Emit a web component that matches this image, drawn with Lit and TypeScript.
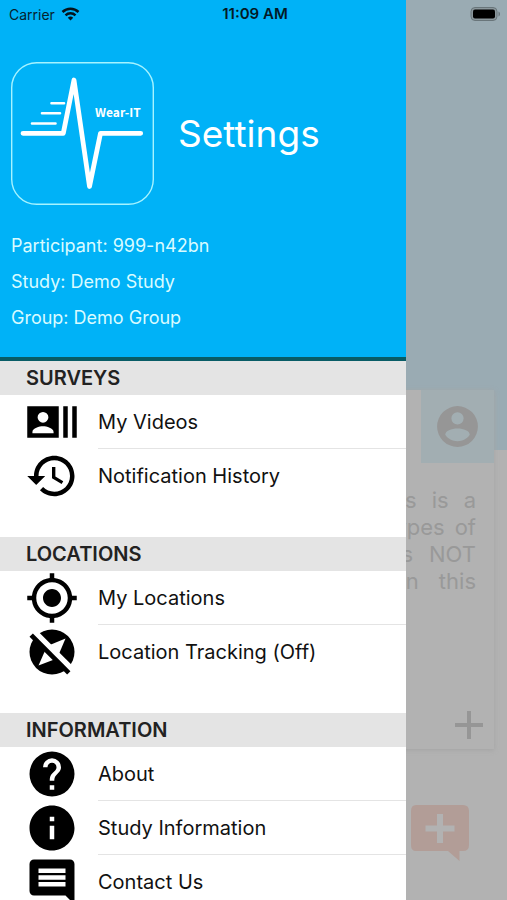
import { LitElement, html, css, svg } from "lit";
import { customElement, property } from "lit/decorators.js";

type IconName = "actors" | "history" | "gps" | "compassOff" | "help" | "info" | "comment";

const icons: Record<IconName, unknown> = {
  actors: svg`<path fill-rule="evenodd" d="M21 5h2v14h-2zM17 5h2v14h-2zM1 5h14v14H1zM8 7.500a2.400 2.400 0 1 0 0 4.800a2.400 2.400 0 1 0 0-4.800zM12.700 17v-.6c0-1.600-3.100-2.500-4.700-2.500s-4.700.9-4.700 2.500v.6z"/>`,
  history: svg`<path d="M13 3c-4.970 0-9 4.030-9 9H1l3.890 3.890.07.14L9 12H6c0-3.870 3.130-7 7-7s7 3.130 7 7-3.130 7-7 7c-1.930 0-3.680-.79-4.940-2.060l-1.420 1.420C8.270 19.990 10.510 21 13 21c4.970 0 9-4.030 9-9s-4.030-9-9-9zm-1 5v5l4.280 2.540.72-1.210-3.500-2.080V8H12z"/>`,
  gps: svg`<path d="M12 8c-2.210 0-4 1.790-4 4s1.790 4 4 4 4-1.790 4-4-1.790-4-4-4zm8.940 3A8.994 8.994 0 0 0 13 3.060V1h-2v2.060A8.994 8.994 0 0 0 3.060 11H1v2h2.060A8.994 8.994 0 0 0 11 20.940V23h2v-2.060A8.994 8.994 0 0 0 20.940 13H23v-2h-2.060zM12 19c-3.870 0-7-3.130-7-7s3.130-7 7-7 7 3.130 7 7-3.130 7-7 7z"/>`,
  compassOff: svg`
    <circle cx="12" cy="12" r="10"/>
    <path fill="#fff" d="M14.800 13.600L13 15.300L6 18l3-6.800L11 8.900L18 6z"/>
    <path fill="#fff" d="M3.280 4L4.500 2.200L6.300 3.300L21.700 18.700L20 20.720z"/>
    <path d="M2 5.270L3.500 3.800L20.200 20.500L18.730 22z"/>`,
  help: svg`<path d="M15.070 11.250l-.9.920C13.450 12.890 13 13.500 13 15h-2v-.5c0-1.110.45-2.110 1.170-2.830l1.240-1.260c.37-.36.59-.86.59-1.410a2 2 0 0 0-4 0H8a4 4 0 0 1 8 0c0 .88-.36 1.670-.93 2.250M13 19h-2v-2h2M12 2a10 10 0 1 0 0 20 10 10 0 0 0 0-20z"/>`,
  info: svg`<path d="M12 2C6.480 2 2 6.480 2 12s4.480 10 10 10 10-4.480 10-10S17.520 2 12 2zm1 15h-2v-6h2v6zm0-8h-2V7h2v2z"/>`,
  comment: svg`<path d="M21.990 4c0-1.100-.89-2-1.990-2H4c-1.100 0-2 .9-2 2v12c0 1.100.9 2 2 2h14l4 4-.01-18zM18 14H6v-2h12v2zm0-3H6V9h12v2zm0-3H6V6h12v2z"/>`,
};

interface Section {
  title: string;
  items: { icon: IconName; label: string }[];
}

const sections: Section[] = [
  {
    title: "SURVEYS",
    items: [
      { icon: "actors", label: "My Videos" },
      { icon: "history", label: "Notification History" },
    ],
  },
  {
    title: "LOCATIONS",
    items: [
      { icon: "gps", label: "My Locations" },
      { icon: "compassOff", label: "Location Tracking (Off)" },
    ],
  },
  {
    title: "INFORMATION",
    items: [
      { icon: "help", label: "About" },
      { icon: "info", label: "Study Information" },
      { icon: "comment", label: "Contact Us" },
    ],
  },
];

@customElement("status-bar")
class StatusBar extends LitElement {
  static styles = css`
    :host {
      display: grid;
      grid-template-columns: 1fr auto 1fr;
      align-items: center;
      height: 28px;
      padding: 0 6px 0 9px;
      font-size: 14px;
      color: #06222f;
    }
    .carrier { display: flex; align-items: center; gap: 6px; }
    .time { font-size: 15px; font-weight: 600; line-height: 20px; color: #031a26; }
    .battery { justify-self: end; display: block; }
    svg { display: block; }
  `;
  render() {
    return html`
      <span class="carrier">Carrier
        <svg width="19" height="14" viewBox="0 0 18 14" fill="none" stroke="#04141c" stroke-width="2.500">
          <path d="M1 5A11.500 11.500 0 0 1 17 5"/>
          <path d="M4 8.300A7.300 7.300 0 0 1 14 8.300"/>
          <path d="M9 13.500L6.300 10.700A4 4 0 0 1 11.700 10.700Z" fill="#04141c" stroke="none"/>
        </svg>
      </span>
      <span class="time">11:09 AM</span>
      <svg class="battery" width="31" height="14" viewBox="0 0 31 14">
        <rect x="1" y="0.500" width="26" height="13" rx="4" fill="#8b979c" stroke="#69757a"/>
        <rect x="3" y="2.500" width="22" height="9" rx="2" fill="#000"/>
        <path d="M28.500 4.500c2 .8 2 4.200 0 5z" fill="#69757a"/>
      </svg>
    `;
  }
}

@customElement("menu-section")
class MenuSection extends LitElement {
  @property({ attribute: false }) section!: Section;
  static styles = css`
    :host { display: block; padding-bottom: 34px; }
    h2 {
      margin: 0;
      padding-left: 26px;
      background: #e4e4e4;
      color: #222;
      font-size: 20px;
      font-weight: 600;
      line-height: 34px;
    }
    ul { margin: 0; padding: 0; list-style: none; }
    .row {
      display: flex;
      align-items: center;
      gap: 19px;
      height: 54px;
      padding-left: 25px;
      color: #111;
      text-decoration: none;
    }
    .icon { flex: none; width: 54px; height: 54px; fill: #000; }
    .label {
      flex: 1;
      box-sizing: border-box;
      height: 54px;
      line-height: 54px;
      font-size: 20px;
      white-space: nowrap;
      border-bottom: 1px solid #e4e4e4;
    }
    li:last-child .label { border-bottom-color: transparent; }
  `;
  render() {
    return html`
      <h2>${this.section.title}</h2>
      <ul>
        ${this.section.items.map(
          (item) => html`<li>
            <a class="row" href="#">
              <svg class="icon" viewBox="0 0 24 24" aria-hidden="true">${icons[item.icon]}</svg>
              <span class="label">${item.label}</span>
            </a>
          </li>`
        )}
      </ul>
    `;
  }
}

@customElement("settings-drawer")
class SettingsDrawer extends LitElement {
  static styles = css`
    :host { display: block; background: #fff; }
    header {
      box-sizing: border-box;
      height: 361px;
      padding: 62px 11px 0;
      background: #00b2f7;
      border-bottom: 4px solid #085c66;
      color: #fff;
    }
    .brand { display: flex; align-items: center; gap: 24px; }
    .logo { flex: none; display: block; }
    .logo-name { font: 700 12px "Noto Sans CJK JP", "Open Sans", sans-serif; fill: #fff; }
    h1 { margin: 0; font-size: 37px; font-weight: 400; line-height: 48px; }
    .details {
      margin: 23px 0 0;
      padding: 0;
      list-style: none;
      font-size: 18px;
      line-height: 36px;
      color: #d9fbff;
    }
  `;
  render() {
    return html`
      <header>
        <div class="brand">
          <svg class="logo" width="143" height="143" viewBox="0 0 143 143" fill="none" stroke="#fff" stroke-linecap="round" stroke-linejoin="round">
            <rect x="0.700" y="0.700" width="141.600" height="141.600" rx="25" stroke="#a6f3ff" stroke-width="1.400"/>
            <path stroke-width="4.800" d="M12 71.300H52.300L63 18L78.500 124.500L89.500 71.300H129.700"/>
            <path stroke-width="2.600" d="M40.500 41.200H53M31 51.200H49M21 61.500H44.500"/>
            <text class="logo-name" x="84" y="55" stroke="none">Wear-IT</text>
          </svg>
          <h1>Settings</h1>
        </div>
        <ul class="details">
          <li>Participant: 999-n42bn</li>
          <li>Study: Demo Study</li>
          <li>Group: Demo Group</li>
        </ul>
      </header>
      <nav>${sections.map((s) => html`<menu-section .section=${s}></menu-section>`)}</nav>
    `;
  }
}

const cardLines = [
  { words: ["This", "is", "a"], gap: 15 },
  { words: ["types", "of"], gap: 10 },
  { words: ["is", "NOT"], gap: 16 },
  { words: ["in", "this"], gap: 20 },
];

@customElement("dimmed-page")
class DimmedPage extends LitElement {
  static styles = css`
    :host {
      display: flex;
      flex-direction: column;
      align-items: flex-end;
      box-sizing: border-box;
      padding: 390px 13px 0 0;
      background: linear-gradient(#9aabb3 50%, #b2b2b2 50%);
    }
    .card {
      box-sizing: border-box;
      display: flex;
      flex-direction: column;
      align-items: flex-end;
      width: 95%;
      height: 359px;
      background: #b2b2b2;
      box-shadow: 0 1px 5px #a3a3a3;
    }
    button { border: 0; padding: 0; background: none; display: block; }
    .profile { padding: 12px; background: #a2aeb2; }
    .text {
      margin: 24px 18px 0 0;
      font-size: 22px;
      line-height: 27px;
      color: #999;
    }
    .line { display: flex; justify-content: flex-end; }
    .more { margin: auto 9px 8px 0; }
    .feedback { margin: 50px 22px 0 0; }
    svg { display: block; }
  `;
  render() {
    return html`
      <section class="card">
        <button class="profile" aria-label="Profile">
          <svg width="49" height="49" viewBox="0 0 24 24" fill="#969696">
            <path fill-rule="evenodd" d="M12 2a10 10 0 1 0 0 20a10 10 0 0 0 0-20zM12 5a3 3 0 1 1 0 6a3 3 0 0 1 0-6zM12 13c3 0 6 1.100 6 3.100c-1.300 2-3.500 3.100-6 3.100s-4.700-1.100-6-3.100c0-2 3-3.100 6-3.100z"/>
          </svg>
        </button>
        <div class="text">
          ${cardLines.map(
            (l) => html`<div class="line" style="gap:${l.gap}px">${l.words.map((w) => html`<span>${w}</span>`)}</div>`
          )}
        </div>
        <button class="more" aria-label="Expand">
          <svg width="32" height="32" viewBox="0 0 32 32" stroke="#969696" stroke-width="4"><path d="M16 2v28M2 16h28"/></svg>
        </button>
      </section>
      <button class="feedback" aria-label="Add feedback">
        <svg width="64" height="64" viewBox="0 0 64 64">
          <path fill="#b29d97" d="M8 6H55Q61 6 61 12V46Q61 52 55 52H51.500V62L40 52H8Q3 52 3 46V12Q3 6 8 6z"/>
          <path d="M32 15v29M17.500 29.500h29" stroke="#b2b2b2" stroke-width="6"/>
        </svg>
      </button>
    `;
  }
}

@customElement("app-root")
class AppRoot extends LitElement {
  static styles = css`
    :host {
      display: grid;
      grid-template: minmax(0, 1fr) / minmax(0, 1fr);
      height: 100vh;
      overflow: hidden;
      font-family: Inter, "Liberation Sans", sans-serif;
    }
    .layer { grid-area: 1 / 1; min-height: 0; }
    .drawer { width: 80%; overflow: hidden; }
    .status { align-self: start; }
  `;
  render() {
    return html`
      <dimmed-page class="layer"></dimmed-page>
      <settings-drawer class="layer drawer"></settings-drawer>
      <status-bar class="layer status"></status-bar>
    `;
  }
}
